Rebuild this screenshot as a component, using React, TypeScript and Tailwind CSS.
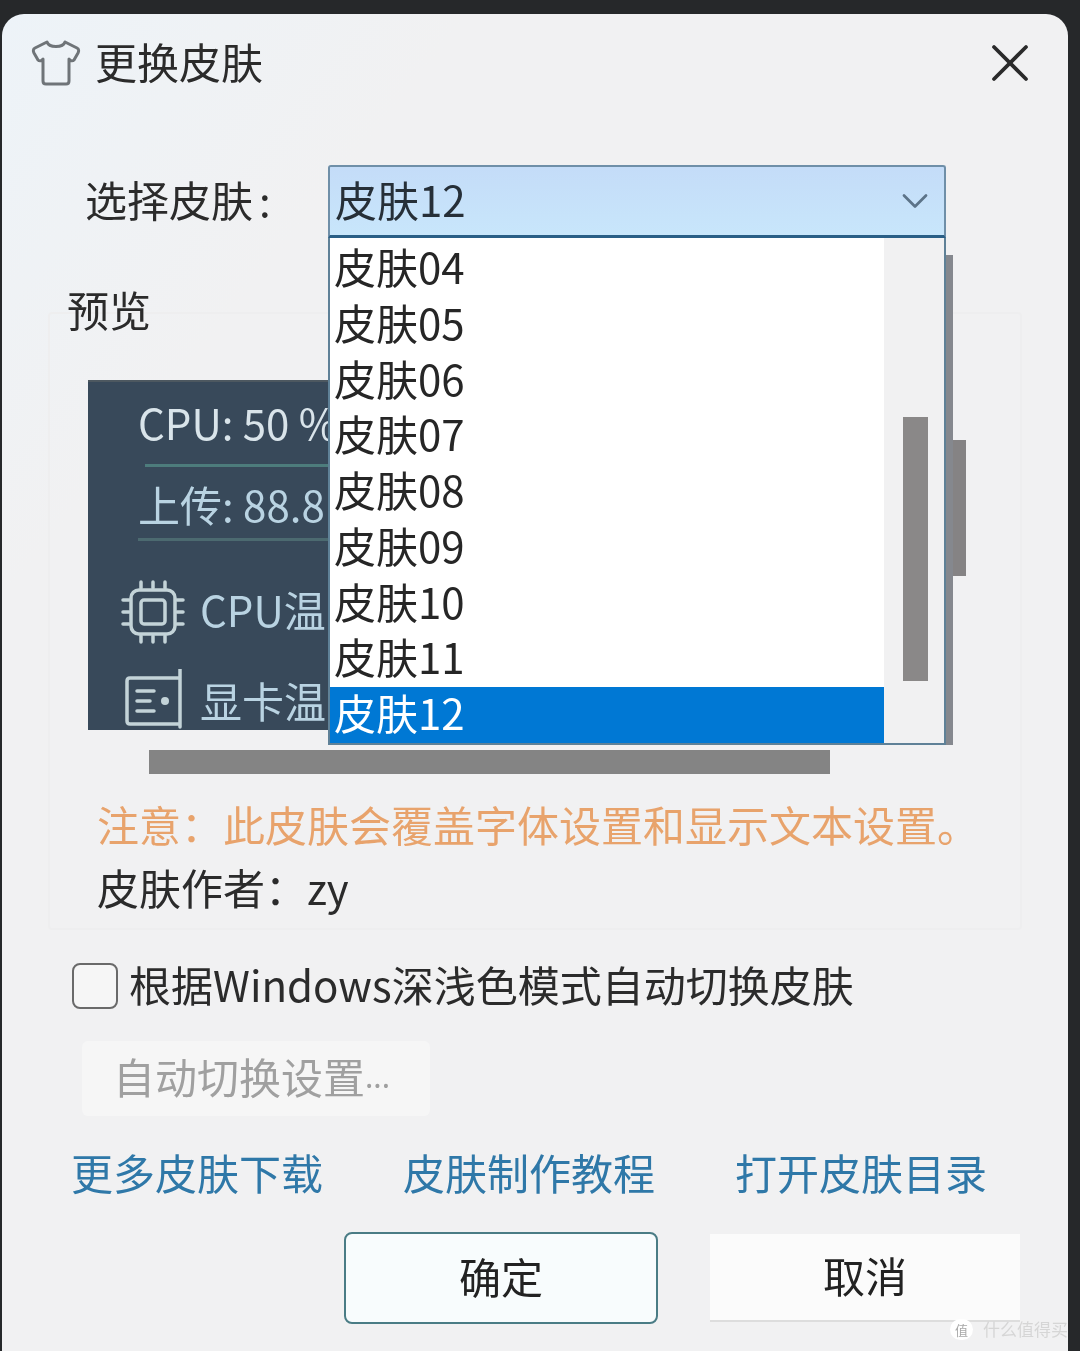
import { ChevronDown, X } from "lucide-react";

const items = ["皮肤04", "皮肤05", "皮肤06", "皮肤07", "皮肤08", "皮肤09", "皮肤10", "皮肤11", "皮肤12"];

function ShirtIcon() {
	return (
		<svg width="50" height="48" viewBox="0 0 50 48" fill="none" stroke="#6f7478" strokeWidth="3" strokeLinejoin="round">
			<path d="M16 3 C18 9 32 9 34 3 L46 9 C48 10 48 12 47 14 L43 21 C42 22 40 22 39 21 L38 20 V42 C38 44 37 45 35 45 H15 C13 45 12 44 12 42 V20 L11 21 C10 22 8 22 7 21 L3 14 C2 12 2 10 4 9 Z" />
		</svg>
	);
}

function CpuIcon() {
	return (
		<svg width="66" height="66" viewBox="0 0 66 66" fill="none" stroke="#c3d3d8" strokeWidth="3.5" strokeLinecap="round">
			<rect x="11" y="11" width="44" height="44" rx="8" />
			<rect x="21" y="21" width="24" height="24" rx="3" />
			<path d="M21 3v6M33 3v6M45 3v6M21 57v6M33 57v6M45 57v6M3 21h6M3 33h6M3 45h6M57 21h6M57 33h6M57 45h6" />
		</svg>
	);
}

function GpuIcon() {
	return (
		<svg width="60" height="62" viewBox="0 0 60 62" fill="none" stroke="#c3d3d8" strokeWidth="3.5" strokeLinecap="round">
			<path d="M56 0V58M56 9H6C4 9 3 10 3 12V52C3 54 4 55 6 55H56" />
			<path d="M13 22H30M13 32H26M13 42H30" />
			<circle cx="41" cy="32" r="4" fill="#c3d3d8" stroke="none" />
		</svg>
	);
}

function Preview() {
	return (
		<div className="w-[858px] h-[350px] overflow-hidden bg-[#38495a] border-t-2 border-[#4d5860] text-[#d9e4ea] text-[42px] leading-[44px] whitespace-nowrap">
			<div className="ml-[50px] mt-[18px] h-[50px]">CPU: 50 %</div>
			<div className="ml-[57px] mt-[14px] h-[3px] bg-[#4d7c7c]" />
			<div className="ml-[50px] mt-[15px] h-[50px] text-[#b9d3e2]">上传: 88.8</div>
			<div className="ml-[50px] mt-[6px] h-[3px] bg-[#4c6a70]" />
			<div className="ml-[32px] mt-[38px] h-[66px] flex items-center gap-[14px] text-[#b9d3e2]">
				<CpuIcon />
				<span className="pb-[6px]">CPU温</span>
			</div>
			<div className="ml-[36px] mt-[24px] h-[62px] flex items-center gap-[16px] text-[#b9d3e2]">
				<GpuIcon />
				<span>显卡温</span>
			</div>
		</div>
	);
}

function Dropdown() {
	return (
		<div className="absolute left-[326px] top-[224px] w-[618px] h-[507px]">
			<div className="absolute right-[-7px] top-[17px] bottom-0 w-[7px] bg-[#85888e]" />
			<div className="relative h-full flex border-2 border-t-0 border-[#5f8197] bg-white text-[#262626] text-[42px]">
				<div className="w-[554px] pt-[3px] flex flex-col">
					{items.map((item) => (
						<div
							key={item}
							className={
								item === "皮肤12"
									? "h-[55.75px] leading-[50px] pl-[4px] bg-[#0078d4] text-white"
									: "h-[55.75px] leading-[50px] pl-[4px]"
							}
						>
							{item}
						</div>
					))}
				</div>
				<div className="flex-1 bg-[#f1f1f2] pl-[19px] pt-[179px]">
					<div className="w-[25px] h-[264px] bg-[#8a8888]" />
				</div>
			</div>
		</div>
	);
}

export default function App() {
	return (
		<div
			className="relative w-[1080px] h-[1351px] overflow-hidden bg-[#26282a] pt-[14px] pl-[2px] pr-[12px] text-[42px] text-[#2b2b2b] blur-[0.5px]"
			style={{ fontFamily: '"Noto Sans CJK SC", sans-serif' }}
		>
			<div className="relative h-full rounded-t-[22px] bg-linear-to-br from-[#edf3f8] via-[#f1f1f2] via-[22%] to-[#f1f1f2] flex flex-col">
				<div className="h-[98px] shrink-0 flex items-center pl-[29px]">
					<ShirtIcon />
					<span className="ml-[14px] pb-[6px]">更换皮肤</span>
					<X className="ml-auto mr-[26px] text-[#2a2a2a]" size={64} strokeWidth={1.4} />
				</div>

				<div className="mt-[53px] flex items-center pl-[83px]">
					<span className="w-[243px] pb-[6px]">
						选择皮肤<span className="ml-[6px]">:</span>
					</span>
					<div className="w-[618px] h-[73px] flex items-center justify-between pl-[5px] pr-[7px] rounded-t-[3px] border-2 border-b-[3px] border-[#6f8fa8] border-b-[#2a5f86] bg-linear-to-b from-[#c4dcf8] to-[#c8e6fb] text-[#262f38]">
						<span className="pb-[6px]">皮肤12</span>
						<ChevronDown className="text-[#5c7388]" size={44} strokeWidth={1.5} />
					</div>
				</div>

				<div className="mt-[74px] mx-[46px] h-[618px] rounded-[4px] border-2 border-[#eeeeef] pl-[38px]">
					<div className="-mt-[27px] ml-[-21px] h-[47px] leading-[44px]">预览</div>
					<div className="mt-[46px] flex">
						<Preview />
						<div className="ml-[2px] mt-[60px] w-[18px] h-[136px] bg-[#858384]" />
					</div>
					<div className="ml-[61px] mt-[20px] w-[681px] h-[24px] bg-[#848484]" />
					<div className="ml-[9px] mt-[28px] h-[50px] leading-[44px] whitespace-nowrap text-[#e8a36c]">注意：此皮肤会覆盖字体设置和显示文本设置。</div>
					<div className="ml-[9px] mt-[13px] h-[50px] leading-[44px]">皮肤作者：zy</div>
				</div>

				<div className="mt-[33px] ml-[70px] h-[46px] flex items-center gap-[11px]">
					<div className="w-[46px] h-[46px] rounded-[8px] border-2 border-[#6a6a6a] bg-[#f6f6f6]" />
					<span className="pb-[6px]">根据Windows深浅色模式自动切换皮肤</span>
				</div>

				<div className="mt-[32px] ml-[80px] w-[348px] h-[75px] pl-[31px] pb-[6px] flex items-center rounded-[6px] bg-[#f6f6f6] text-[#a0a0a0]">
					自动切换设置<span className="text-[30px]">...</span>
				</div>

				<div className="mt-[35px] ml-[69px] h-[50px] leading-[42px] flex gap-[80px] text-[#2f78a8]">
					<span>更多皮肤下载</span>
					<span>皮肤制作教程</span>
					<span>打开皮肤目录</span>
				</div>

				<div className="mt-[31px] mr-[48px] flex items-center justify-end gap-[52px]">
					<button className="w-[314px] h-[92px] pb-[6px] rounded-[8px] border-2 border-[#4a7c85] bg-[#f8fcfd] text-[#222222]">确定</button>
					<button className="w-[310px] h-[88px] pb-[6px] bg-[#fbfbfb] border-b-2 border-[#dddddd] text-[#222222]">取消</button>
				</div>

				<Dropdown />
			</div>

			<div className="absolute right-[12px] bottom-[11px] flex items-center gap-[10px] text-[17px] leading-[22px] text-[#d6d6d6]">
				<span className="w-[23px] h-[21px] rounded-full bg-white text-[13px] leading-[21px] text-center text-[#a8a8a8]">值</span>
				<span>什么值得买</span>
			</div>
		</div>
	);
}
